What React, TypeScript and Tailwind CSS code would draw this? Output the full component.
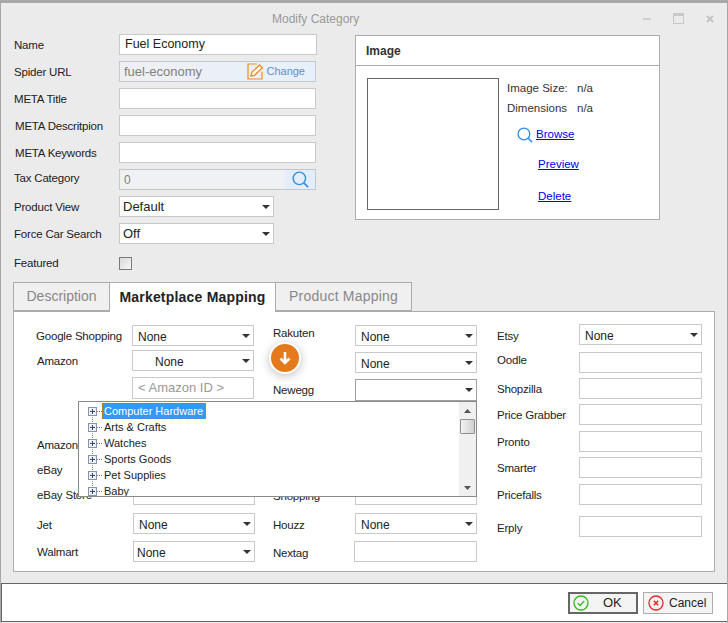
import React from "react";

const Caret = () => (
  <svg width="8" height="4" viewBox="0 0 8 4" className="shrink-0"><path d="M0 0h8L4 4z" fill="#333" /></svg>
);

const SearchIcon = ({ s = 18 }: { s?: number }) => (
  <svg width={s} height={s} viewBox="0 0 18 18" fill="none" stroke="#3a8fdc" strokeWidth="1.5">
    <circle cx="7.8" cy="7.8" r="6.6" />
    <path d="M12.6 12.6L17 17" strokeWidth="1.8" />
  </svg>
);

function Input({ w = "w-[122px]", h = "h-[21px]", cls = "", children }: { w?: string; h?: string; cls?: string; children?: React.ReactNode }) {
  return <div className={`${w} ${h} ${cls} shrink-0 bg-white border border-[#c9c9c9] flex items-center text-[13px] text-[#222] overflow-hidden`}>{children}</div>;
}

function Select({ w = "w-[122px]", text = "None", pad = "pl-[5px]", cls = "", textCls = "text-[12px] pt-[2px]", h = "h-[21px]" }: { w?: string; text?: string; pad?: string; cls?: string; textCls?: string; h?: string }) {
  return (
    <div className={`${w} ${h} ${pad} ${cls} shrink-0 bg-white border border-[#c9c9c9] flex items-center justify-between pr-[3px] text-[#222]`}>
      <span className={textCls}>{text}</span>
      <Caret />
    </div>
  );
}

function Row({ label, lw, mt, labelCls = "", children }: { label?: string; lw: string; mt: string; labelCls?: string; children: React.ReactNode }) {
  return (
    <div className={`flex items-center ${mt}`}>
      <div className={`${lw} shrink-0 text-[11.5px] tracking-[-0.2px] leading-[13px] pt-px text-[#222] whitespace-nowrap ${labelCls}`}>{label}</div>
      {children}
    </div>
  );
}

const treeItems = ["Computer Hardware", "Arts & Crafts", "Watches", "Sports Goods", "Pet Supplies", "Baby"];

function Tree() {
  return (
    <div className="absolute left-[64px] top-[89px] w-[399px] h-[96px] z-10 bg-white border border-[#8a8a8a] flex text-[11px] text-[#222]">
      <div className="flex-1 relative pt-px overflow-hidden">
        <div className="absolute left-[13px] top-[10px] h-[80px] border-l border-dotted border-[#777]" />
        {treeItems.map((t, i) => (
          <div key={t} className="h-[16px] flex items-center pl-[9px] relative">
            <div className="w-[9px] h-[9px] bg-[#eef0f5] border border-[#8a90a8] flex items-center justify-center relative shrink-0">
              <div className="absolute w-[5px] h-px bg-[#334a80]" />
              <div className="absolute w-px h-[5px] bg-[#334a80]" />
            </div>
            <div className="w-[5px] border-t border-dotted border-[#777] shrink-0" />
            {i === 0 ? (
              <span className="bg-[#3399ff] text-white h-[16px] leading-[14px] pl-px pr-[2px] border border-dotted border-[#c8700a] whitespace-nowrap">{t}</span>
            ) : (
              <span className="pl-[2px] pt-px whitespace-nowrap">{t}</span>
            )}
          </div>
        ))}
      </div>
      <div className="w-[17px] bg-[#f0f0f0] flex flex-col items-center relative">
        <svg width="7" height="4" viewBox="0 0 7 4" className="mt-[7px]"><path d="M0 4L3.5 0 7 4z" fill="#555" /></svg>
        <div className="mt-[6px] w-[15px] h-[15px] bg-gradient-to-r from-[#f3f3f3] to-[#cfcfcf] border border-[#8f8f8f] rounded-[1px]" />
        <svg width="7" height="4" viewBox="0 0 7 4" className="mt-auto mb-[6px]"><path d="M0 0L3.5 4 7 0z" fill="#555" /></svg>
      </div>
    </div>
  );
}

export default function App() {
  return (
    <div className="w-[728px] h-[623px] overflow-hidden bg-[#ebebeb] border-t-[3px] border-x border-[#a8a8a8] font-['Liberation_Sans',sans-serif] flex flex-col">
      {/* title bar */}
      <div className="h-[31px] shrink-0 flex items-center">
        <div className="pl-[271px] text-[12px] text-[#999]">Modify Category</div>
        <div className="ml-auto flex items-center pr-[13px]">
          <div className="w-[8px] h-[2px] bg-[#cfcfcf]" />
          <div className="ml-[22px] w-[11px] h-[11px] border border-[#c8c8c8] border-t-[3px]" />
          <svg width="8" height="8" viewBox="0 0 8 8" className="ml-[22px]"><path d="M1 1l6 6M7 1L1 7" stroke="#c4c4c4" strokeWidth="2" /></svg>
        </div>
      </div>

      {/* top form */}
      <div className="flex shrink-0 pl-[13px]">
        <div className="w-[304px] flex flex-col">
          <Row label="Name" lw="w-[105px]" mt="mt-0"><Input w="w-[198px]" cls="pl-[5px] !text-[12.5px]">Fuel Economy</Input></Row>
          <Row label="Spider URL" lw="w-[105px]" mt="mt-[6px]">
            <div className="w-[197px] h-[21px] bg-gradient-to-r from-[#f0f0f2] to-[#e6f0fb] border border-[#c4c8cc] flex items-center pl-[4px] text-[13px] text-[#808080]">
              <span>fuel-economy</span>
              <svg width="17" height="17" viewBox="0 0 17 17" fill="none" className="ml-auto">
                <path d="M15 8.5V16H1V1h9" stroke="#f28a1e" strokeWidth="1.2" />
                <path d="M4 13l.8-3.6L12.5 2l2.8 2.8L7.6 12.3z" stroke="#f28a1e" strokeWidth="1.3" fill="#fff" />
              </svg>
              <span className="ml-[2px] mr-[10px] text-[11px] text-[#5f8fc8]">Change</span>
            </div>
          </Row>
          <Row label="META Title" lw="w-[105px]" mt="mt-[6px]"><Input w="w-[197px]" /></Row>
          <Row label="META Descritpion" lw="w-[105px] pl-px" mt="mt-[6px]"><Input w="w-[197px]" /></Row>
          <Row label="META Keywords" lw="w-[105px] pl-px" mt="mt-[6px]"><Input w="w-[197px]" /></Row>
          <Row label="Tax Category" lw="w-[105px]" labelCls="mb-[4px]" mt="mt-[6px]">
            <div className="w-[197px] h-[21px] border border-[#c4c8cc] bg-[#eff1f4] flex items-center pl-[4px] text-[12px] text-[#808080]">
              <span>0</span>
              <div className="ml-auto w-[30px] h-full bg-[#e4eefa] flex items-center justify-center"><SearchIcon s={17} /></div>
            </div>
          </Row>
          <Row label="Product View" lw="w-[105px]" mt="mt-[6px]"><Select w="w-[155px]" text="Default" pad="pl-[3px]" textCls="text-[13px]" /></Row>
          <Row label="Force Car Search" lw="w-[105px]" mt="mt-[6px]"><Select w="w-[155px]" text="Off" pad="pl-[3px]" textCls="text-[13px]" /></Row>
          <Row label="Featured" lw="w-[105px]" labelCls="!pt-0" mt="mt-[13px]">
            <div className="w-[13px] h-[13px] border border-[#7a7a7a] bg-gradient-to-br from-[#d8d8d8] to-[#f7f7f7]" />
          </Row>
        </div>

        <div className="ml-[37px] mt-px w-[305px] h-[185px] bg-white border border-[#acacac] flex flex-col">
          <div className="h-[30px] shrink-0 border-b border-[#acacac] pl-[10px] flex items-center text-[12px] font-bold text-[#333]">Image</div>
          <div className="flex pl-[11px] pt-[12px]">
            <div className="w-[132px] h-[132px] border border-[#666] bg-white" />
            <div className="ml-[8px] text-[11.5px] text-[#333] flex flex-col relative">
              <div className="flex h-[20px] items-center mt-px whitespace-nowrap"><span className="w-[70px]">Image Size:</span><span>n/a</span></div>
              <div className="flex h-[20px] items-center whitespace-nowrap"><span className="w-[70px]">Dimensions</span><span>n/a</span></div>
              <div className="flex items-center mt-[6px] pl-[10px] h-[20px]">
                <SearchIcon s={16} />
                <a className="ml-[3px] text-[#0000ee] underline">Browse</a>
              </div>
              <a className="mt-[10px] ml-[31px] h-[20px] flex items-center text-[#0000ee] underline">Preview</a>
              <a className="mt-[12px] ml-[31px] h-[20px] flex items-center text-[#0000ee] underline">Delete</a>
            </div>
          </div>
        </div>
      </div>

      {/* tabs */}
      <div className="mt-[12px] ml-[12px] flex h-[30px] shrink-0 relative z-[1] text-[14px]">
        <div className="w-[96px] border border-[#acacac] border-r-0 bg-[#f0f0f0] text-[#888] flex items-center justify-center h-[29px]">Description</div>
        <div className="w-[167px] border border-[#acacac] border-b-0 bg-white text-[#222] font-bold flex items-center justify-center pb-px tracking-[0.2px]">Marketplace Mapping</div>
        <div className="w-[136px] border border-[#acacac] border-l-0 bg-[#f0f0f0] text-[#888] flex items-center justify-center h-[29px] tracking-[0.2px]">Product Mapping</div>
      </div>

      {/* panel */}
      <div className="-mt-px ml-[12px] w-[702px] h-[261px] shrink-0 bg-white border border-[#acacac] relative flex pl-[22px]">
        <Tree />
        <div className="absolute left-[255px] top-[30px] w-[32px] h-[32px] rounded-full bg-[#e57a1c] border-2 border-white shadow-[0_2px_10px_rgba(0,0,0,0.25)] flex items-center justify-center z-[5]">
          <svg width="14" height="14" viewBox="0 0 14 14" fill="none" stroke="#fff" strokeWidth="2.6"><path d="M7 1v11M2.5 7.5L7 12l4.5-4.5" /></svg>
        </div>

        <div className="w-[237px] shrink-0 flex flex-col">
          <Row label="Google Shopping" lw="w-[96px]" mt="mt-[13px]"><Select /></Row>
          <Row label="Amazon" lw="w-[96px] pl-px" mt="mt-[4px]"><Select pad="pl-[22px]" /></Row>
          <Row lw="w-[96px]" mt="mt-[6px]"><Input h="h-[22px]" cls="pl-[5px] !text-[#999]">&lt; Amazon ID &gt;</Input></Row>
          <Row label="Amazon Store" lw="w-[97px] pl-px" mt="mt-[35px]"><Input /></Row>
          <Row label="eBay" lw="w-[97px] pl-px" mt="mt-[4px]"><Input /></Row>
          <Row label="eBay Store" lw="w-[97px] pl-px" mt="mt-[4px]"><Input /></Row>
          <Row label="Jet" lw="w-[97px] pl-px" labelCls="mt-[3px]" mt="mt-[8px]"><Select pad="pl-[5px]" /></Row>
          <Row label="Walmart" lw="w-[97px] pl-px" labelCls="mt-[1px]" mt="mt-[7px]"><Select pad="pl-[3px]" /></Row>
        </div>

        <div className="w-[224px] shrink-0 flex flex-col">
          <Row label="Rakuten" lw="w-[82px]" labelCls="mb-[6px]" mt="mt-[13px]"><Select pad="pl-[5px]" /></Row>
          <Row lw="w-[82px]" mt="mt-[6px]"><Select pad="pl-[5px]" /></Row>
          <Row label="Newegg" lw="w-[82px]" mt="mt-[6px]"><Select text="" h="h-[22px]" cls="!border-[#a0a0a0]" /></Row>
          <Row label="Shopping" lw="w-[82px]" labelCls="mt-[2px]" mt="mt-[83px]"><Input /></Row>
          <Row label="Houzz" lw="w-[82px]" labelCls="mt-[3px]" mt="mt-[8px]"><Select pad="pl-[5px]" /></Row>
          <Row label="Nextag" lw="w-[81px]" labelCls="mt-[2px]" mt="mt-[7px]"><Input w="w-[123px]" /></Row>
        </div>

        <div className="flex-1 flex flex-col">
          <Row label="Etsy" lw="w-[82px]" labelCls="mt-[3px]" mt="mt-[12px]"><Select w="w-[123px]" pad="pl-[5px]" /></Row>
          <Row label="Oodle" lw="w-[82px]" labelCls="mb-[5px]" mt="mt-[7px]"><Input w="w-[123px]" /></Row>
          <Row label="Shopzilla" lw="w-[82px]" mt="mt-[5px]"><Input w="w-[123px]" /></Row>
          <Row label="Price Grabber" lw="w-[82px]" mt="mt-[5px]"><Input w="w-[123px]" /></Row>
          <Row label="Pronto" lw="w-[82px]" mt="mt-[6px]"><Input w="w-[123px]" /></Row>
          <Row label="Smarter" lw="w-[82px]" mt="mt-[5px]"><Input w="w-[123px]" /></Row>
          <Row label="Pricefalls" lw="w-[82px]" mt="mt-[6px]"><Input w="w-[123px]" /></Row>
          <Row label="Erply" lw="w-[82px]" labelCls="mt-[3px]" mt="mt-[11px]"><Input w="w-[123px]" /></Row>
        </div>
      </div>

      {/* footer */}
      <div className="mt-[11px] h-[39px] shrink-0 bg-white border border-[#666] border-r-0 flex items-center justify-end pr-[14px] gap-[5px] text-[12px] text-[#222]">
        <div className="w-[70px] h-[22px] border-2 border-[#666] bg-[#f4f4f4] flex items-center pl-[3px]">
          <svg width="16" height="16" viewBox="0 0 16 16" fill="none"><circle cx="8" cy="8" r="7" stroke="#3cb521" strokeWidth="1.3" /><path d="M4.8 8.2l2.3 2.3 4.2-4.6" stroke="#3cb521" strokeWidth="1.3" /></svg>
          <span className="ml-[14px] text-[13px]">OK</span>
        </div>
        <div className="w-[70px] h-[22px] border border-[#acacac] bg-[#f4f4f4] flex items-center pl-[4px]">
          <svg width="16" height="16" viewBox="0 0 16 16" fill="none"><circle cx="8" cy="8" r="7" stroke="#e8262d" strokeWidth="1.3" /><path d="M5.8 5.8l4.4 4.4M10.2 5.8l-4.4 4.4" stroke="#e8262d" strokeWidth="1.6" /></svg>
          <span className="ml-[5px]">Cancel</span>
        </div>
      </div>
    </div>
  );
}
